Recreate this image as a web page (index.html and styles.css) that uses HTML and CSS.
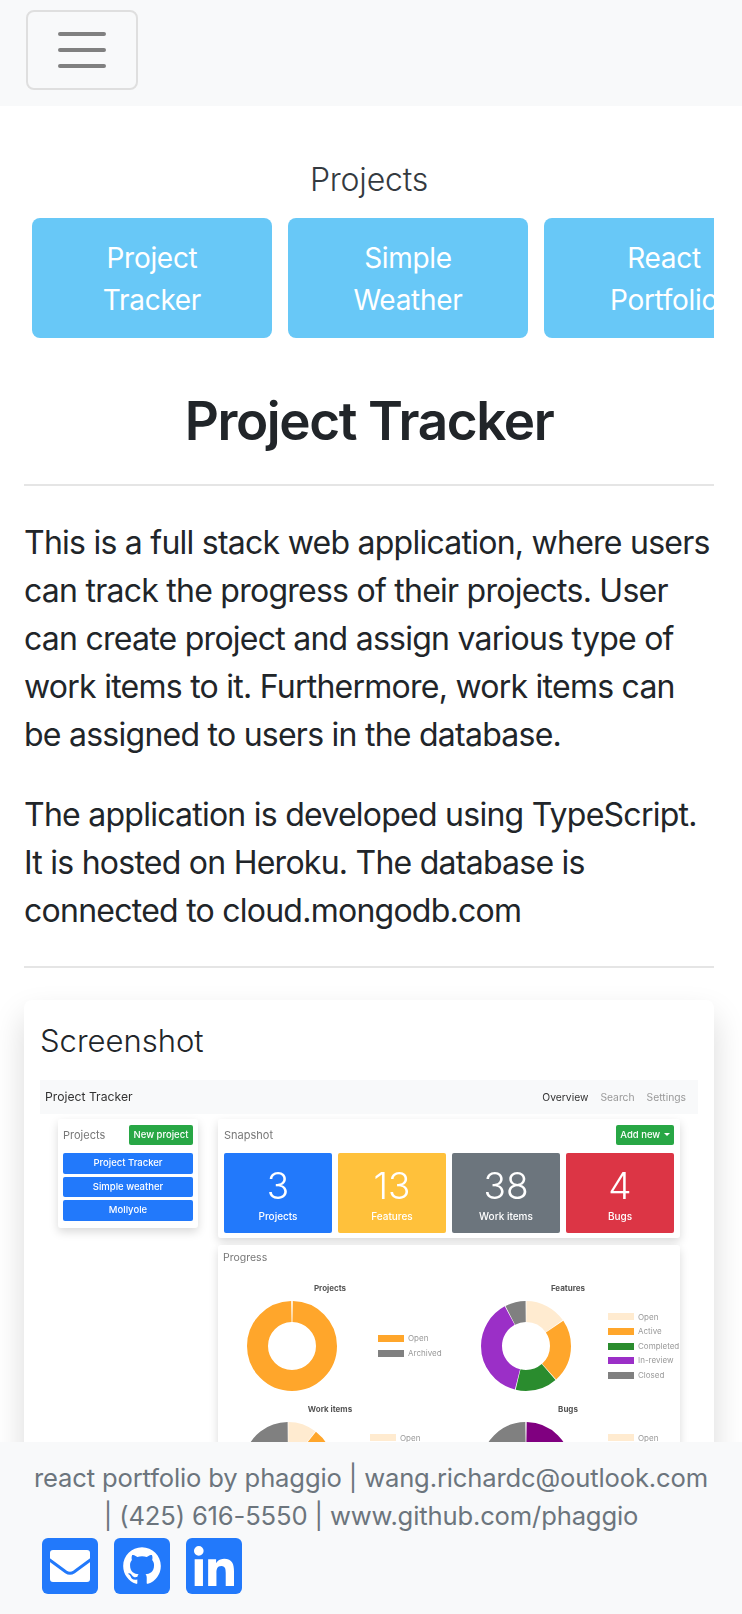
FILE: index.html
```html
<!DOCTYPE html>
<html lang="en">
<head>
    <meta charset="UTF-8">
    <meta name="viewport" content="width=device-width, initial-scale=1.0">
    <title>Project Tracker - React Portfolio</title>
    <link rel="stylesheet" href="styles.css">
</head>
<body>
    <nav class="navbar">
        <button class="toggler" type="button" aria-label="Toggle navigation">
            <svg class="toggler-icon" viewBox="0 0 48 36">
                <path d="M2 2h44M2 18h44M2 34h44"/>
            </svg>
        </button>
    </nav>

    <main class="content">
        <h2 class="projects-title">Projects</h2>
        <div class="project-list">
            <a class="project-btn" href="#">Project Tracker</a>
            <a class="project-btn" href="#">Simple Weather</a>
            <a class="project-btn" href="#">React Portfolio</a>
        </div>

        <h1 class="page-title">Project Tracker</h1>
        <hr>
        <p>This is a full stack web application, where users can track the progress of their projects. User can create project and assign various type of work items to it. Furthermore, work items can be assigned to users in the database.</p>
        <p>The application is developed using TypeScript. It is hosted on Heroku. The database is connected to cloud.mongodb.com</p>
        <hr>

        <section class="card">
            <h4 class="card-title">Screenshot</h4>

            <div class="shot">
                <div class="shot-nav">
                    <span class="shot-brand">Project Tracker</span>
                    <span class="shot-links">
                        <span class="shot-active">Overview</span>
                        <span>Search</span>
                        <span>Settings</span>
                    </span>
                </div>

                <div class="shot-body">
                    <div class="shot-card shot-side">
                        <div class="shot-head">
                            <span>Projects</span>
                            <span class="shot-btn">New project</span>
                        </div>
                        <div class="shot-projects">
                            <span>Project Tracker</span>
                            <span>Simple weather</span>
                            <span>Mollyole</span>
                        </div>
                    </div>

                    <div class="shot-main">
                        <div class="shot-card shot-snapshot">
                            <div class="shot-head">
                                <span>Snapshot</span>
                                <span class="shot-btn shot-btn-add">Add new <i class="caret"></i></span>
                            </div>
                            <div class="tiles">
                                <div class="tile tile-blue"><b>3</b><span>Projects</span></div>
                                <div class="tile tile-yellow"><b>13</b><span>Features</span></div>
                                <div class="tile tile-gray"><b>38</b><span>Work items</span></div>
                                <div class="tile tile-red"><b>4</b><span>Bugs</span></div>
                            </div>
                        </div>

                        <div class="shot-card shot-progress">
                            <div class="progress-title">Progress</div>
                            <div class="charts">
                                <div class="chart chart-wide">
                                    <div class="chart-title">Projects</div>
                                    <div class="chart-row">
                                        <svg class="donut" viewBox="0 0 90 90">
                                            <circle class="seg orange" cx="45" cy="45" r="34.5" pathLength="100" stroke-dasharray="99.4 0.6" stroke-dashoffset="-0.3"/>
                                        </svg>
                                        <ul class="legend">
                                            <li><i class="orange-bg"></i>Open</li>
                                            <li><i class="gray-bg"></i>Archived</li>
                                        </ul>
                                    </div>
                                </div>

                                <div class="chart">
                                    <div class="chart-title">Features</div>
                                    <div class="chart-row">
                                        <svg class="donut" viewBox="0 0 90 90">
                                            <circle class="seg cream" cx="45" cy="45" r="34.5" pathLength="13" stroke-dasharray="1.96 11.04" stroke-dashoffset="-0.02"/>
                                            <circle class="seg orange" cx="45" cy="45" r="34.5" pathLength="13" stroke-dasharray="2.96 10.04" stroke-dashoffset="-2.02"/>
                                            <circle class="seg green" cx="45" cy="45" r="34.5" pathLength="13" stroke-dasharray="1.96 11.04" stroke-dashoffset="-5.02"/>
                                            <circle class="seg purple" cx="45" cy="45" r="34.5" pathLength="13" stroke-dasharray="4.96 8.04" stroke-dashoffset="-7.02"/>
                                            <circle class="seg gray" cx="45" cy="45" r="34.5" pathLength="13" stroke-dasharray="0.96 12.04" stroke-dashoffset="-12.02"/>
                                        </svg>
                                        <ul class="legend">
                                            <li><i class="cream-bg"></i>Open</li>
                                            <li><i class="orange-bg"></i>Active</li>
                                            <li><i class="green-bg"></i>Completed</li>
                                            <li><i class="purple-bg"></i>In-review</li>
                                            <li><i class="gray-bg"></i>Closed</li>
                                        </ul>
                                    </div>
                                </div>

                                <div class="chart">
                                    <div class="chart-title">Work items</div>
                                    <div class="chart-row">
                                        <svg class="donut" viewBox="0 0 90 90">
                                            <circle class="seg cream" cx="45" cy="45" r="34.5" pathLength="38" stroke-dasharray="3.9 34.1" stroke-dashoffset="-0.05"/>
                                            <circle class="seg orange" cx="45" cy="45" r="34.5" pathLength="38" stroke-dasharray="9.9 28.1" stroke-dashoffset="-4.05"/>
                                            <circle class="seg green" cx="45" cy="45" r="34.5" pathLength="38" stroke-dasharray="5.9 32.1" stroke-dashoffset="-14.05"/>
                                            <circle class="seg purple" cx="45" cy="45" r="34.5" pathLength="38" stroke-dasharray="9.9 28.1" stroke-dashoffset="-20.05"/>
                                            <circle class="seg gray" cx="45" cy="45" r="34.5" pathLength="38" stroke-dasharray="7.9 30.1" stroke-dashoffset="-30.05"/>
                                        </svg>
                                        <ul class="legend">
                                            <li><i class="cream-bg"></i>Open</li>
                                            <li><i class="orange-bg"></i>Active</li>
                                            <li><i class="green-bg"></i>Completed</li>
                                            <li><i class="purple-bg"></i>In-review</li>
                                            <li><i class="gray-bg"></i>Closed</li>
                                        </ul>
                                    </div>
                                </div>

                                <div class="chart">
                                    <div class="chart-title">Bugs</div>
                                    <div class="chart-row">
                                        <svg class="donut" viewBox="0 0 90 90">
                                            <circle class="seg dark-purple" cx="45" cy="45" r="34.5" pathLength="4" stroke-dasharray="2.98 1.02" stroke-dashoffset="-0.01"/>
                                            <circle class="seg gray" cx="45" cy="45" r="34.5" pathLength="4" stroke-dasharray="0.98 3.02" stroke-dashoffset="-3.01"/>
                                        </svg>
                                        <ul class="legend">
                                            <li><i class="cream-bg"></i>Open</li>
                                            <li><i class="orange-bg"></i>Active</li>
                                            <li><i class="green-bg"></i>Completed</li>
                                            <li><i class="purple-bg"></i>In-review</li>
                                            <li><i class="gray-bg"></i>Closed</li>
                                        </ul>
                                    </div>
                                </div>
                            </div>
                        </div>
                    </div>
                </div>
            </div>
        </section>
    </main>

    <footer class="footer">
        <div class="footer-text">react portfolio by phaggio | wang.richardc@outlook.com<br>| (425) 616-5550 | www.github.com/phaggio</div>
        <div class="socials">
            <a class="social" href="#" aria-label="Email">
                <svg viewBox="0 0 56 56">
                    <rect x="8" y="12" width="40" height="32" rx="3" fill="#fff"/>
                    <path d="M5 20l19 14q4 2.6 8 0l19-14" fill="none" stroke="#2279fb" stroke-width="3"/>
                </svg>
            </a>
            <a class="social" href="#" aria-label="GitHub">
                <svg viewBox="-3.9 -3.9 23.8 23.8">
                    <path fill="#fff" d="M8 0C3.58 0 0 3.58 0 8c0 3.54 2.29 6.53 5.47 7.59.4.07.55-.17.55-.38 0-.19-.01-.82-.01-1.49-2.01.37-2.53-.49-2.69-.94-.09-.23-.48-.94-.82-1.13-.28-.15-.68-.52-.01-.53.63-.01 1.08.58 1.23.82.72 1.21 1.87.87 2.33.66.07-.52.28-.87.51-1.07-1.78-.2-3.64-.89-3.64-3.95 0-.87.31-1.59.82-2.15-.08-.2-.36-1.02.08-2.12 0 0 .67-.21 2.2.82.64-.18 1.32-.27 2-.27.68 0 1.36.09 2 .27 1.53-1.04 2.2-.82 2.2-.82.44 1.1.16 1.92.08 2.12.51.56.82 1.27.82 2.15 0 3.07-1.87 3.75-3.65 3.95.29.25.54.73.54 1.48 0 1.07-.01 1.93-.01 2.2 0 .21.15.46.55.38A8.013 8.013 0 0016 8c0-4.42-3.58-8-8-8z"/>
                </svg>
            </a>
            <a class="social" href="#" aria-label="LinkedIn">
                <svg viewBox="-89.6 -89.6 627.2 627.2">
                    <path fill="#fff" d="M100.28 448H7.4V148.9h92.88zM53.79 108.1C24.09 108.1 0 83.5 0 53.8a53.79 53.79 0 0 1 107.58 0c0 29.7-24.1 54.3-53.79 54.3zM447.9 448h-92.68V302.4c0-34.7-.7-79.2-48.29-79.2-48.29 0-55.69 37.7-55.69 76.7V448h-92.78V148.9h89.08v40.8h1.3c12.4-23.5 42.69-48.3 87.88-48.3 94 0 111.28 61.9 111.28 142.3V448z"/>
                </svg>
            </a>
        </div>
    </footer>
</body>
</html>
```

FILE: styles.css
```css
* { box-sizing: border-box; }
html, body { height: 100%; }
body { margin: 0; height: 100vh; display: flex; flex-direction: column; overflow: hidden; background: #fff; color: #212529; font-family: Inter, "Liberation Sans", sans-serif; font-size: 32px; line-height: 48px; }

.navbar { flex: none; height: 106px; padding: 10px 26px; background: #f8f9fa; }
.toggler { display: flex; align-items: center; justify-content: center; width: 112px; height: 80px; padding: 0; background: transparent; border: 2px solid #dfdfdf; border-radius: 8px; }
.toggler-icon { width: 48px; height: 36px; }
.toggler-icon path { fill: none; stroke: #808080; stroke-width: 4; stroke-linecap: round; }

.content { flex: 1; min-height: 0; overflow: hidden; padding: 0 28px 0 24px; }
.projects-title { margin: 50px 0 14px; font-size: 32px; line-height: 48px; font-weight: 300; letter-spacing: -0.2px; text-align: center; color: #343a40; }
.project-list { display: flex; gap: 16px; padding-left: 8px; overflow: hidden; }
.project-btn { flex: none; width: 240px; height: 120px; padding: 19px 40px 17px; background: #68c8f7; border-radius: 8px; color: #fff; font-size: 28px; line-height: 42px; letter-spacing: -0.3px; text-align: center; text-decoration: none; }

.page-title { margin: 50px 0 29px; font-size: 53px; line-height: 67px; font-weight: 600; letter-spacing: -1.4px; text-align: center; }
hr { height: 2px; margin: 0; border: 0; background: #e5e5e5; }
p { margin: 0 0 32px; letter-spacing: -0.75px; }
hr + p { margin-top: 33px; }
p + hr { margin-top: -1px; }

.card { margin-top: 32px; padding: 16px; background: #fff; border-radius: 8px; box-shadow: 0 16px 32px rgba(0,0,0,0.15); }
.card-title { margin: 0 0 16px; padding-top: 2px; font-size: 31px; line-height: 46px; font-weight: 300; }

/* picture of the app inside the card, slightly soft like a scaled image */
.shot { filter: blur(0.4px); font-size: 11px; line-height: 14px; color: #777; }
.shot-nav { display: flex; align-items: center; justify-content: space-between; height: 34px; padding: 0 12px 0 5px; background: #f8f9fa; }
.shot-brand { font-size: 12.2px; color: #333; }
.shot-links { display: flex; gap: 12px; font-size: 10.3px; color: #999; }
.shot-active { color: #333; }

.shot-body { display: flex; gap: 20px; margin-top: 5px; padding-left: 18px; }
.shot-card { background: #fff; border-radius: 3px; box-shadow: 0 4px 10px rgba(0,0,0,0.15); }
.shot-side { flex: none; width: 140px; height: 109px; padding: 6px 5px; }
.shot-main { flex: none; width: 462px; }
.shot-head { display: flex; align-items: center; justify-content: space-between; height: 20px; }
.shot-btn { display: block; width: 64px; height: 20px; background: #28a745; border-radius: 2px; color: #fff; font-size: 9.5px; line-height: 20px; font-weight: 500; text-align: center; }
.shot-btn-add { width: 58px; }
.caret { display: inline-block; margin-left: 1px; vertical-align: 2px; border: 3px solid transparent; border-top-color: #fff; border-bottom: 0; }
.shot-projects { display: flex; flex-direction: column; gap: 3px; margin-top: 8px; }
.shot-projects span { height: 20.5px; background: #2279fb; border-radius: 2px; color: #fff; font-size: 9.5px; line-height: 20.5px; font-weight: 500; text-align: center; }

.shot-snapshot { height: 119px; padding: 6px; }
.tiles { display: grid; grid-template-columns: repeat(4, 108px); gap: 6px; margin-top: 8px; }
.tile { height: 80px; padding-top: 11px; border-radius: 2px; color: #fff; text-align: center; }
.tile b { display: block; font-size: 37px; line-height: 44px; font-weight: 300; }
.tile span { display: block; margin-top: 1px; font-size: 10px; line-height: 14px; font-weight: 500; }
.tile-blue { background: #2279fb; }
.tile-yellow { background: #ffc13b; }
.tile-gray { background: #6c757d; }
.tile-red { background: #dc3545; }

.shot-progress { height: 260px; margin-top: 7px; padding-top: 6px; }
.progress-title { height: 14px; margin-bottom: 17px; padding-left: 5px; font-size: 10.5px; }
.charts { display: grid; grid-template-columns: 224px 224px; column-gap: 14px; row-gap: 12px; }
.chart-title { height: 12px; margin-bottom: 7px; font-size: 8px; line-height: 12px; font-weight: 700; color: #555; text-align: center; }
.chart-row { display: flex; align-items: center; gap: 37px; padding-left: 25px; }
.chart-wide .chart-row { gap: 41px; padding-left: 29px; }

.donut { flex: none; width: 90px; height: 90px; transform: rotate(-90deg); }
.seg { fill: none; stroke-width: 21; }
.orange { stroke: #ffa62b; }
.cream { stroke: #ffebd0; }
.green { stroke: #2a8c2e; }
.purple { stroke: #9b2fc7; }
.dark-purple { stroke: #800080; }
.gray { stroke: #808080; }

.legend { margin: 0; padding: 0; list-style: none; font-size: 8px; line-height: 14.6px; color: #999; }
.legend li { display: flex; align-items: center; gap: 4px; white-space: nowrap; }
.legend i { width: 26px; height: 7px; }
.orange-bg { background: #ffa62b; }
.cream-bg { background: #ffebd0; }
.green-bg { background: #2a8c2e; }
.purple-bg { background: #9b2fc7; }
.gray-bg { background: #808080; }

.footer { flex: none; position: relative; height: 172px; padding-top: 17px; background: #f8f9fa; color: #6c757d; font-size: 25.6px; line-height: 38px; letter-spacing: -0.15px; text-align: center; }
.socials { display: flex; gap: 16px; margin-top: 3px; padding-left: 42px; }
.social { display: block; width: 56px; height: 56px; background: #2279fb; border-radius: 6px; }
.social svg { display: block; width: 56px; height: 56px; }
```
